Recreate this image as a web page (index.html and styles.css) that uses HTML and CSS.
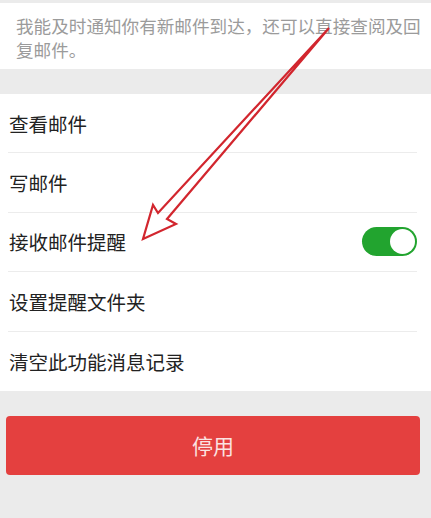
FILE: index.html
```html
<!DOCTYPE html>
<html lang="zh-CN">
<head>
  <meta charset="UTF-8">
  <meta name="viewport" content="width=device-width, initial-scale=1.0">
  <title>QQ邮箱提醒</title>
  <link rel="stylesheet" href="styles.css">
</head>
<body>
  <div class="page">
    <div class="intro">
      <p>我能及时通知你有新邮件到达，还可以直接查阅及回复邮件。</p>
    </div>

    <ul class="menu">
      <li class="menu-item">查看邮件</li>
      <li class="menu-item">写邮件</li>
      <li class="menu-item">
        <span>接收邮件提醒</span>
        <span class="switch on"><span class="knob"></span></span>
      </li>
      <li class="menu-item">设置提醒文件夹</li>
      <li class="menu-item">清空此功能消息记录</li>
    </ul>

    <div class="actions">
      <button class="stop-button">停用</button>
    </div>

    <!-- annotation arrow drawn over the screenshot -->
    <svg class="annotation" width="431" height="518" viewBox="0 0 431 518">
      <path d="M329 28 L167 219 L176 224 L143 239 L153 205 L158 213 L329 28"
            fill="none" stroke="#d2262e" stroke-width="2.2" stroke-linejoin="miter"/>
    </svg>
  </div>
</body>
</html>
```

FILE: styles.css
```css
* {
  margin: 0;
  padding: 0;
  box-sizing: border-box;
}

body {
  font-family: "Noto Sans CJK SC", "Noto Sans", sans-serif;
  background: #ebebeb;
  color: #222222;
}

.page {
  position: relative;
  width: 431px;
  height: 518px;
  overflow: hidden;
  padding-top: 3px;
}

.intro {
  background: #ffffff;
  height: 66px;
  padding: 11px 2px 0 16px;
}

.intro p {
  font-size: 17.6px;
  line-height: 24px;
  color: #9b9b9b;
}

.menu {
  list-style: none;
  background: #ffffff;
  margin-top: 25px;
}

.menu-item {
  display: flex;
  align-items: center;
  justify-content: space-between;
  height: 59.4px;
  margin: 0 14px 0 8px;
  padding-left: 1px;
  font-size: 19.5px;
  border-bottom: 1px solid #ececec;
}

.menu-item:last-child {
  border-bottom: none;
}

.switch {
  display: flex;
  justify-content: flex-end;
  align-items: center;
  width: 55px;
  height: 29px;
  border-radius: 15px;
  background: #22a42f;
  padding: 2px;
}

.knob {
  width: 25px;
  height: 25px;
  border-radius: 50%;
  background: #ffffff;
}

.actions {
  padding: 25px 11px 0 6px;
}

.stop-button {
  display: block;
  width: 100%;
  height: 59px;
  border: none;
  border-radius: 4px;
  background: #e4403f;
  color: #fbe3e2;
  font-family: inherit;
  font-size: 21px;
}

.annotation {
  position: absolute;
  left: 0;
  top: 0;
  pointer-events: none;
}
```
